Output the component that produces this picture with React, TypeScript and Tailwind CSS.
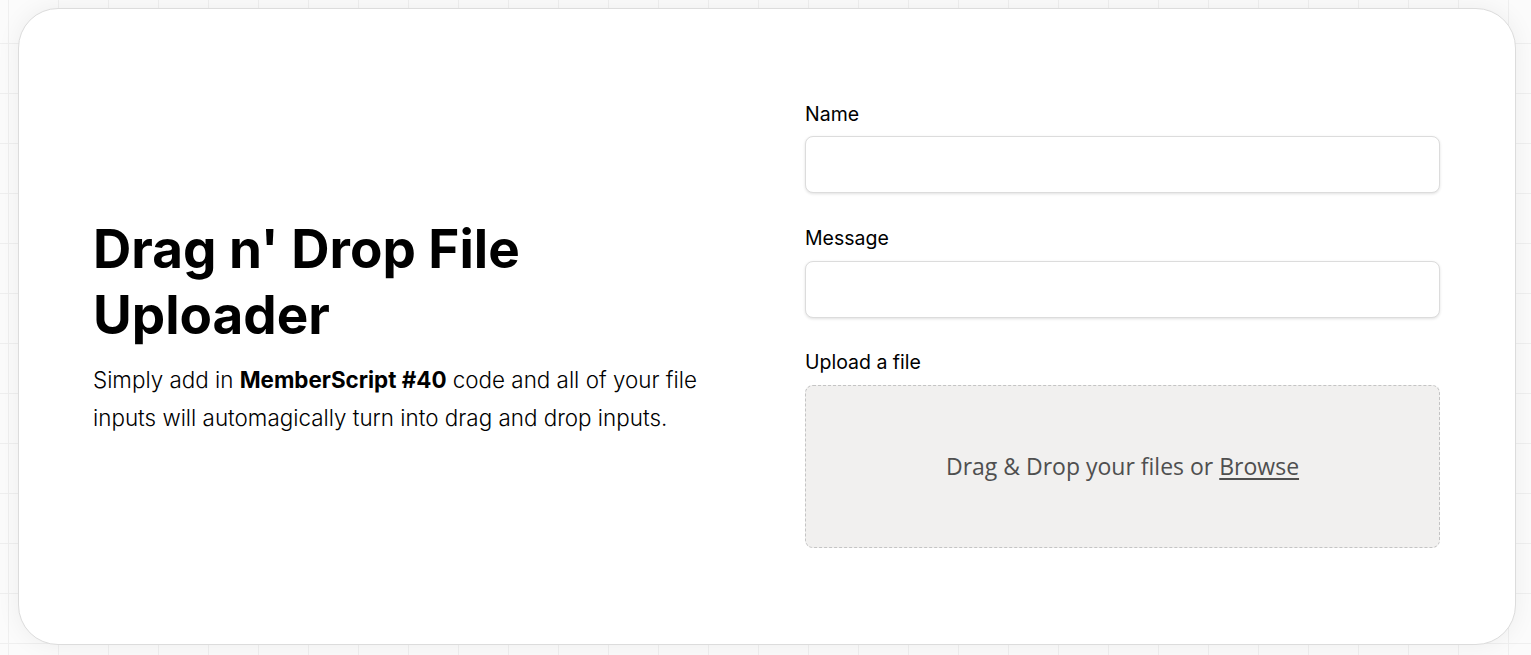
export default function App() {
  return (
    <div className="min-h-[655px] w-full bg-[#fbfbfb] bg-[linear-gradient(to_right,#efefef_1px,transparent_1px),linear-gradient(to_bottom,#efefef_1px,transparent_1px)] bg-[size:50px_50px] bg-[position:8px_43px] pt-[8px] pb-[10px] font-['Inter',sans-serif]">
      <div className="ml-[18px] w-[1498px] rounded-[40px] border border-[#dcdcdc] bg-white px-[75px] pt-[90px] pb-[96px] shadow-[0_0_24px_rgba(0,0,0,0.06)]">
        <div className="grid grid-cols-2 items-center gap-[76px]">
          <div className="pt-[6px]">
            <h1 className="-ml-[1px] text-[53px] font-bold leading-[66px] tracking-normal text-black">
              Drag n' Drop File Uploader
            </h1>
            <p className="-ml-[1px] mt-[13px] text-[22.4px] font-light leading-[38px] text-black">
              Simply add in <strong className="font-bold">MemberScript #40</strong> code and all of your file
              inputs will automagically turn into drag and drop inputs.
            </p>
          </div>

          <form className="flex flex-col" onSubmit={(e) => e.preventDefault()}>
            <label className="text-[19.5px] font-normal leading-[30px] text-black">Name</label>
            <input
              type="text"
              className="mt-[7px] h-[57px] w-full rounded-[8px] border border-[#dcdcdc] bg-white px-4 shadow-[0_1px_3px_rgba(0,0,0,0.12)] outline-none"
            />

            <label className="mt-[30px] text-[19.5px] font-normal leading-[30px] text-black">Message</label>
            <input
              type="text"
              className="mt-[8px] h-[57px] w-full rounded-[8px] border border-[#dcdcdc] bg-white px-4 shadow-[0_1px_3px_rgba(0,0,0,0.12)] outline-none"
            />

            <label className="mt-[29px] text-[19.5px] font-normal leading-[30px] text-black">Upload a file</label>
            <div className="mt-[8px] flex h-[163px] w-full items-center justify-center rounded-[8px] border border-dashed border-[#c4c4c4] bg-[#f1f0ef]">
              <span className="font-['Open_Sans',sans-serif] text-[23px] text-[#4f4f4f]">
                Drag &amp; Drop your files or <span className="underline underline-offset-[3px]">Browse</span>
              </span>
            </div>
          </form>
        </div>
      </div>
    </div>
  );
}
